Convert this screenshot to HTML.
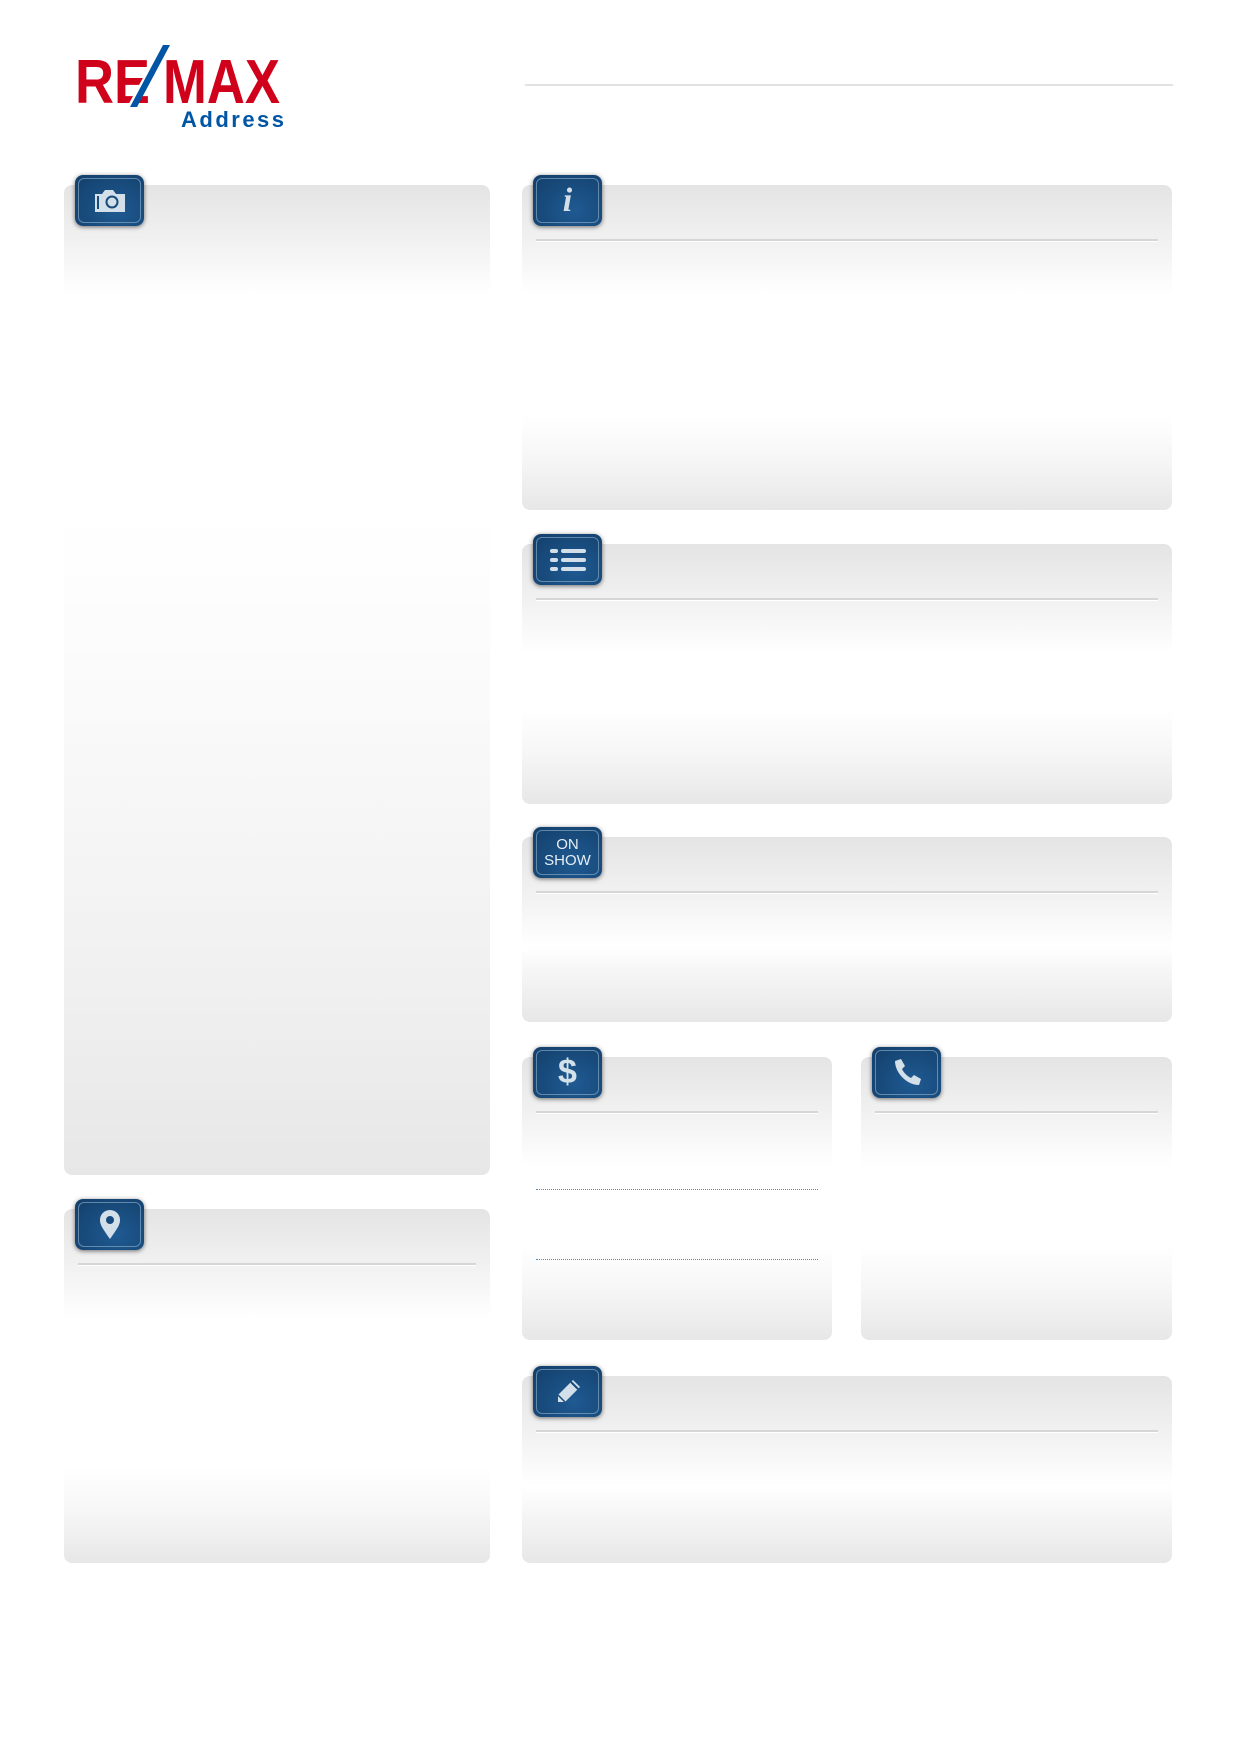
<!DOCTYPE html>
<html><head><meta charset="utf-8"><style>
*{margin:0;padding:0;box-sizing:border-box}
body{width:1240px;height:1754px;background:#fff;position:relative;font-family:"Liberation Sans",sans-serif;overflow:hidden}
.p{position:absolute;border-radius:8px;background:linear-gradient(#e4e4e4 0,#f2f2f2 60px,#fff 110px,#fff calc(100% - 95px),#f6f6f6 calc(100% - 50px),#e7e7e7 100%)}
.ln{position:absolute;left:14px;right:14px;height:3px;border-top:2px solid #d6d6d6;border-bottom:1px solid #fff}
.ic{position:absolute;left:11px;top:-10px;width:69px;height:51px;border-radius:8px;background:radial-gradient(ellipse at 60% 70%,#1f5a92,#123e69);box-shadow:0 1px 5px rgba(0,0,0,.55);display:flex;align-items:center;justify-content:center;color:#d3e0ea}
.ic:before{content:"";position:absolute;inset:3px;border:1px solid rgba(160,190,215,.55);border-radius:6px}
.dot{position:absolute;left:14px;right:14px;border-top:1px dotted #5a8ab8}
</style></head><body>
<div style="position:absolute;left:75px;top:45px;width:210px;height:62px">
<svg width="210" height="62" viewBox="0 0 210 62">
<text x="0" y="58" font-family="Liberation Sans" font-weight="bold" font-size="62" fill="#d0021b" textLength="75" lengthAdjust="spacingAndGlyphs">RE</text>
<text x="88" y="58" font-family="Liberation Sans" font-weight="bold" font-size="62" fill="#d0021b" textLength="117" lengthAdjust="spacingAndGlyphs">MAX</text>
<polygon points="52,62 60,62 94,0 86,0" fill="#fff"/>
<polygon points="55,62 62,62 95,0 88,0" fill="#0055a5"/>
</svg></div>
<div style="position:absolute;left:181px;top:107px;font-size:22px;font-weight:bold;color:#0055a5;letter-spacing:2.5px">Address</div>
<div style="position:absolute;left:525px;top:84px;width:648px;height:2px;background:#e2e2e2"></div>

<div class="p" style="left:64px;top:185px;width:426px;height:990px;background:linear-gradient(#e4e4e4 0,#f2f2f2 60px,#fff 110px,#fff 330px,#fafafa 520px,#f0f0f0 800px,#e7e7e7 100%)"><div class="ic"><svg width="32" height="24" viewBox="0 0 32 24"><path d="M1 5h7l3-4h8l3 4h9v18H1z" fill="#d3e0ea"/><rect x="3" y="7" width="2" height="13" fill="#174b7c"/><circle cx="18" cy="13" r="6.5" fill="#174b7c"/><circle cx="18" cy="13" r="4.5" fill="#d3e0ea"/></svg></div></div>

<div class="p" style="left:64px;top:1209px;width:426px;height:354px"><div class="ic"><svg width="22" height="30" viewBox="0 0 22 30"><path d="M11 29C4 19 1 15 1 10a10 10 0 0 1 20 0c0 5-3 9-10 19z" fill="#d3e0ea"/><circle cx="11" cy="10" r="4" fill="#174b7c"/></svg></div><div class="ln" style="top:54px"></div></div>

<div class="p" style="left:522px;top:185px;width:650px;height:325px"><div class="ic"><span style="font-family:'Liberation Serif',serif;font-style:italic;font-weight:bold;font-size:34px">i</span></div><div class="ln" style="top:54px"></div></div>

<div class="p" style="left:522px;top:544px;width:650px;height:260px"><div class="ic"><svg width="36" height="22" viewBox="0 0 36 22"><g fill="#d3e0ea"><rect x="0" y="0" width="8" height="4" rx="2"/><rect x="11" y="0" width="25" height="4" rx="2"/><rect x="0" y="9" width="8" height="4" rx="2"/><rect x="11" y="9" width="25" height="4" rx="2"/><rect x="0" y="18" width="8" height="4" rx="2"/><rect x="11" y="18" width="25" height="4" rx="2"/></g></svg></div><div class="ln" style="top:54px"></div></div>

<div class="p" style="left:522px;top:837px;width:650px;height:185px"><div class="ic"><span style="font-size:15px;line-height:16px;text-align:center;color:#e6eef4">ON<br>SHOW</span></div><div class="ln" style="top:54px"></div></div>

<div class="p" style="left:522px;top:1057px;width:310px;height:283px"><div class="ic"><span style="font-weight:bold;font-size:34px">$</span></div><div class="ln" style="top:54px"></div><div class="dot" style="top:132px"></div><div class="dot" style="top:202px"></div></div>

<div class="p" style="left:861px;top:1057px;width:311px;height:283px"><div class="ic"><svg width="30" height="30" viewBox="0 0 30 30"><path d="M3 3l6-2 4 7-3 3c2 4 5 7 9 9l3-3 7 4-2 6c-12 0-24-12-24-24z" fill="#d3e0ea"/></svg></div><div class="ln" style="top:54px"></div></div>

<div class="p" style="left:522px;top:1376px;width:650px;height:187px"><div class="ic"><svg width="30" height="30" viewBox="0 0 30 30"><path d="M20 3l7 7-15 15-7 0 0-7z" fill="#d3e0ea"/><path d="M18 5l7 7" stroke="#174b7c" stroke-width="2"/><path d="M5 18l7 7" stroke="#174b7c" stroke-width="1.5"/></svg></div><div class="ln" style="top:54px"></div></div>
</body></html>
